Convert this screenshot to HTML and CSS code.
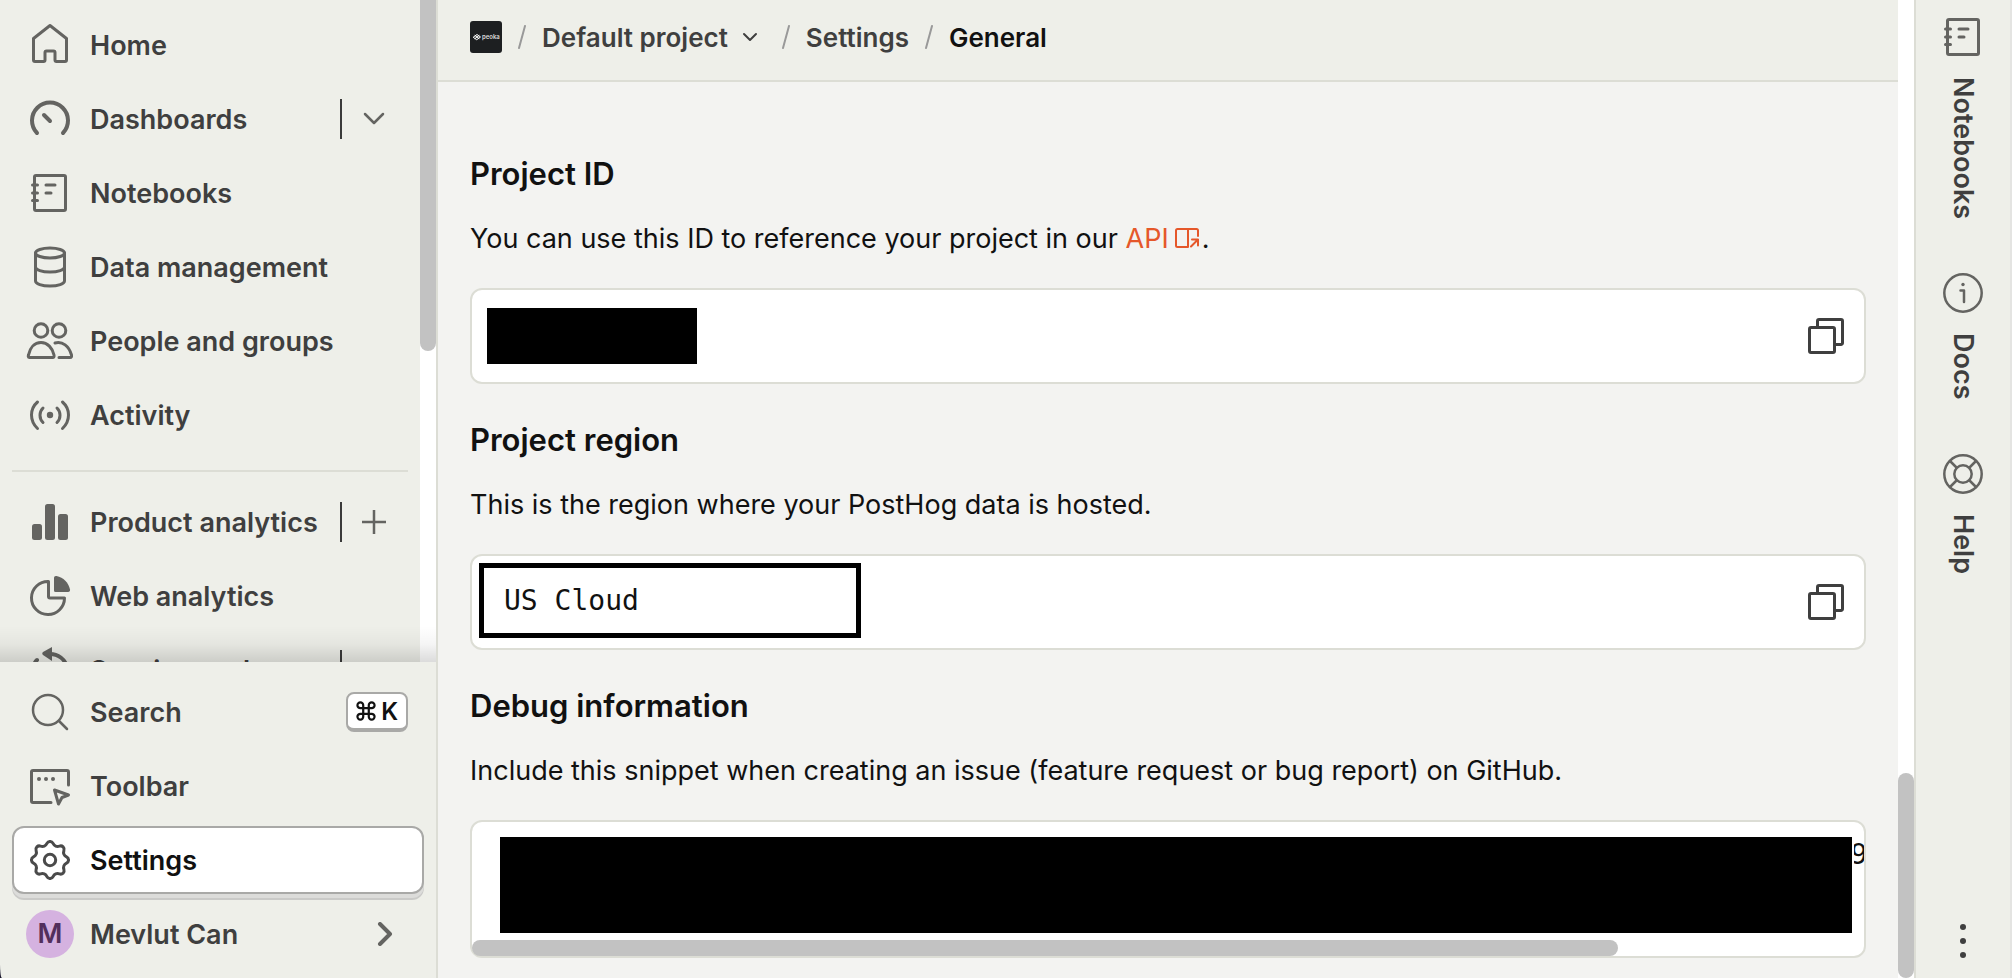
FILE: index.html
```html
<!DOCTYPE html>
<html lang="en">

<head>
  <meta charset="UTF-8">
  <meta name="viewport" content="width=device-width, initial-scale=1.0">
  <title>Settings - General</title>
  <link rel="stylesheet" href="styles.css">
</head>

<body>
  <!-- shared icons -->
  <svg class="sprite" aria-hidden="true">
    <symbol id="notebook" viewBox="0 0 48 48">
      <rect x="8.5" y="6.5" width="31" height="35" rx="1.5" />
      <path d="M6.5 16h5M6.5 24h5M6.5 31.5h5M20 16h9M20 24h5" />
    </symbol>
    <symbol id="copy" viewBox="0 0 36 36">
      <rect x="1.5" y="9.5" width="25" height="25" rx="1.5" />
      <path d="M9.5 9.5V3A1.5 1.5 0 0 1 11 1.5h22A1.5 1.5 0 0 1 34.5 3v22a1.5 1.5 0 0 1-1.5 1.5h-6.5" />
    </symbol>
  </svg>

  <div class="app">
    <div class="sidebar">
      <div class="nav-area">
        <nav class="nav">
          <ul>
            <li>
              <a href="#" class="item">
                <svg class="icon" viewBox="0 0 48 48"><path d="M24 4.5 40.500 17.500V39a1.500 1.500 0 0 1-1.500 1.500h-8.500a1.500 1.500 0 0 1-1.500-1.500v-7.500a1.500 1.500 0 0 0-1.500-1.500h-7a1.500 1.500 0 0 0-1.500 1.500V39a1.500 1.500 0 0 1-1.500 1.500H9A1.500 1.500 0 0 1 7.500 39V17.500Z" /></svg>
                Home
              </a>
            </li>
            <li>
              <a href="#" class="item">
                <svg class="icon thick" viewBox="0 0 48 48"><path d="M11 38a18 18 0 1 1 26 0M18 20l6 6" /></svg>
                Dashboards
              </a>
              <button class="side" aria-label="Open dashboards">
                <svg viewBox="0 0 24 24"><path d="m3 7 9 9 9-9" /></svg>
              </button>
            </li>
            <li>
              <a href="#" class="item">
                <svg class="icon"><use href="#notebook" /></svg>
                Notebooks
              </a>
            </li>
            <li>
              <a href="#" class="item">
                <svg class="icon" viewBox="0 0 48 48"><ellipse cx="24" cy="10" rx="14.500" ry="5" /><path d="M9.500 10v28c0 2.800 6.500 5 14.500 5s14.500-2.200 14.500-5V10M9.500 24c0 2.800 6.500 5 14.500 5s14.500-2.200 14.500-5" /></svg>
                Data management
              </a>
            </li>
            <li>
              <a href="#" class="item">
                <svg class="icon" viewBox="0 0 48 48"><circle cx="15" cy="13.500" r="6.800" /><circle cx="33" cy="13.500" r="6.800" /><path d="M3.500 40.500C2 40.500 2.200 39 2.500 38 4 30.500 8.500 25.500 15 25.500S26.500 31 28 38c.3 1.500 0 2.500-1.500 2.500ZM29 26c7.500-2 14 3 16.500 12 .3 1.500 0 2.500-1.500 2.500H33" /></svg>
                People and groups
              </a>
            </li>
            <li>
              <a href="#" class="item">
                <svg class="icon" viewBox="0 0 48 48"><circle class="fill" cx="24" cy="24" r="3.200" /><path d="M11.500 11C3.500 18 3.500 30 11.500 37.500M36.500 11c8 7 8 19 0 26.500M17 17c-4 4-4 10.500 0 14.500M31 17c4 4 4 10.500 0 14.500" /></svg>
                Activity
              </a>
            </li>
          </ul>
          <hr>
          <ul>
            <li>
              <a href="#" class="item">
                <svg class="icon" viewBox="0 0 48 48"><g class="fill"><rect x="6" y="26" width="10" height="16" rx="2.500" /><rect x="19" y="6" width="10" height="36" rx="2.500" /><rect x="32" y="16" width="10" height="26" rx="2.500" /></g></svg>
                Product analytics
              </a>
              <button class="side" aria-label="New insight">
                <svg viewBox="0 0 24 24"><path d="M12 0v24M0 12h24" /></svg>
              </button>
            </li>
            <li>
              <a href="#" class="item">
                <svg class="icon" viewBox="0 0 48 48"><path d="M22.500 9.500A16.500 16.500 0 1 0 38.500 26H24a1.500 1.500 0 0 1-1.500-1.500Z" /><path class="fill" d="M28 6c0-1.500 1-2.300 2.500-2C37.500 5.500 42.500 10.500 44 17.500c.3 1.500-.5 2.500-2 2.500H29.500A1.500 1.500 0 0 1 28 18.500Z" /></svg>
                Web analytics
              </a>
            </li>
            <li>
              <a href="#" class="item">
                <svg class="icon thick" viewBox="0 0 48 48"><path d="M24 8c8 0 15 5 17 13M11 14c-3 3-4 6-5 10" /><path class="fill" d="M26 1v14l-9-6c-1-1-1-2 0-3Z" /></svg>
                Session replay
              </a>
              <button class="side" aria-label="Open session replay"></button>
            </li>
          </ul>
        </nav>
        <div class="scrollbar">
          <div class="thumb nav-thumb"></div>
        </div>
      </div>
      <div class="nav-bottom">
        <ul>
          <li>
            <button class="item">
              <svg class="icon thin" viewBox="0 0 48 48"><circle cx="22" cy="22" r="15" /><path d="m33 33 8 8" /></svg>
              Search
              <kbd>
                <svg viewBox="0 0 18 18"><path d="M6.500 6.500h5v5h-5zM6.500 6.500V4A2.600 2.600 0 1 0 4 6.500ZM11.500 6.500V4A2.600 2.600 0 1 1 14 6.500ZM6.500 11.500V14A2.600 2.600 0 1 1 4 11.500ZM11.500 11.500V14A2.600 2.600 0 1 0 14 11.500Z" /></svg>
                K
              </kbd>
            </button>
          </li>
          <li>
            <button class="item">
              <svg class="icon" viewBox="0 0 48 48"><path d="M42.500 23V10A1.500 1.500 0 0 0 41 8.500H7A1.500 1.500 0 0 0 5.500 10v29A1.500 1.500 0 0 0 7 40.500h18M28.500 28l14 5-6.500 2.500-3.500 6.500Z" /><g class="fill"><circle cx="13" cy="17" r="2" /><circle cx="20" cy="17" r="2" /><circle cx="27" cy="17" r="2" /></g></svg>
              Toolbar
            </button>
          </li>
          <li>
            <a href="#" class="item active">
              <svg class="icon" viewBox="0 0 48 48">
                <path id="tooth" d="M24 5.500C28 5.500 26 8.600 29.700 10.100 33.400 11.600 34.300 8.100 37.100 10.900 39.900 13.700 36.400 14.600 37.900 18.300 39.400 22 42.500 20 42.500 24" />
                <use href="#tooth" transform="rotate(90 24 24)" />
                <use href="#tooth" transform="rotate(180 24 24)" />
                <use href="#tooth" transform="rotate(270 24 24)" />
                <circle cx="24" cy="24" r="5.700" />
              </svg>
              Settings
            </a>
          </li>
          <li>
            <button class="item">
              <span class="avatar">M</span>
              Mevlut Can
              <svg class="arrow" viewBox="0 0 24 24"><path d="m6 2 10 10L6 22" /></svg>
            </button>
          </li>
        </ul>
      </div>
    </div>

    <div class="main">
      <div class="page">
        <header class="breadcrumbs">
          <svg class="logo" viewBox="0 0 32 32"><rect width="32" height="32" rx="3" /><path d="m3.500 16 3.500-2.500 3.500 2.500L7 18.500ZM5 14.500l4 3M9 14.500l-4 3" /><text x="12" y="18">peoka</text></svg>
          <svg class="slash" viewBox="0 0 8 24"><path d="M7 1 1 23" /></svg>
          <button class="crumb">
            Default project
            <svg viewBox="0 0 16 16"><path d="m2 5 6 6 6-6" /></svg>
          </button>
          <svg class="slash" viewBox="0 0 8 24"><path d="M7 1 1 23" /></svg>
          <a href="#" class="crumb">Settings</a>
          <svg class="slash" viewBox="0 0 8 24"><path d="M7 1 1 23" /></svg>
          <span class="crumb here">General</span>
        </header>
        <main class="content">
          <section>
            <h2>Project ID</h2>
            <p>You can use this ID to reference your project in our <a href="#">API<svg viewBox="0 0 24 20"><path d="M23 8V2.500A1.500 1.500 0 0 0 21.500 1h-19A1.500 1.500 0 0 0 1 2.500v15A1.500 1.500 0 0 0 2.500 19H13M13 1v18M16 18.500l7-7M17 11.500h6v6" /></svg></a>.</p>
            <div class="snippet">
              <div class="mask"></div>
              <button aria-label="Copy project ID"><svg><use href="#copy" /></svg></button>
            </div>
          </section>
          <section>
            <h2>Project region</h2>
            <p>This is the region where your PostHog data is hosted.</p>
            <div class="snippet region">
              <code>US Cloud</code>
              <button aria-label="Copy project region"><svg><use href="#copy" /></svg></button>
            </div>
          </section>
          <section>
            <h2>Debug information</h2>
            <p>Include this snippet when creating an issue (feature request or bug report) on GitHub.</p>
            <div class="snippet debug">
              <div class="line">
                <div class="mask"></div>
                <code><span>9</span></code>
              </div>
              <div class="thumb debug-thumb"></div>
            </div>
          </section>
        </main>
      </div>
      <div class="scrollbar">
        <div class="thumb page-thumb"></div>
      </div>
    </div>

    <aside class="panel">
      <button>
        <svg class="icon"><use href="#notebook" /></svg>
        <span>Notebooks</span>
      </button>
      <button>
        <svg class="icon thin" viewBox="0 0 48 48"><circle cx="24" cy="24" r="18.700" /><circle class="fill" cx="24" cy="15.500" r="1.700" /><path d="M21.500 21.500H25V33" /></svg>
        <span>Docs</span>
      </button>
      <button>
        <svg class="icon thin" viewBox="0 0 48 48"><circle cx="24" cy="24" r="18.700" /><circle cx="24" cy="24" r="8.700" /><path d="m11 11 6.500 6.500M37 11l-6.500 6.500M11 37l6.500-6.500M37 37l-6.500-6.500" /></svg>
        <span>Help</span>
      </button>
      <button class="more" aria-label="More options">
        <svg viewBox="0 0 6 34"><circle cx="3" cy="3" r="3" /><circle cx="3" cy="17" r="3" /><circle cx="3" cy="31" r="3" /></svg>
      </button>
    </aside>
  </div>
</body>

</html>
```
FILE: styles.css
```css
* {
  margin: 0;
  padding: 0;
  box-sizing: border-box;
}

body {
  background-color: #1d1b2f;
  color: #111;
  font-family: Inter, "Liberation Sans", sans-serif;
  font-size: 27px;
}

ul {
  list-style: none;
}

a {
  color: inherit;
  text-decoration: none;
}

button {
  border: 0;
  background: none;
  color: inherit;
  font: inherit;
  cursor: pointer;
}

svg {
  fill: none;
  stroke: currentColor;
  stroke-width: 3;
  stroke-linecap: round;
  stroke-linejoin: round;
  flex-shrink: 0;
}

.sprite {
  display: none;
}

.app {
  display: flex;
  height: 100vh;
  overflow: hidden;
}

.icon {
  width: 48px;
  height: 48px;
  color: #646461;

  &.thick {
    stroke-width: 4;
  }

  &.thin {
    stroke-width: 2.5;
  }
}

.fill {
  fill: currentColor;
  stroke: none;
}

.scrollbar {
  width: 16px;
  flex-shrink: 0;
  background-color: #fff;
}

.thumb {
  background-color: #c2c2c2;
  border-radius: 8px;
}

/* sidebar */
.sidebar {
  width: 438px;
  flex-shrink: 0;
  display: flex;
  flex-direction: column;
  background-color: #eeefe9;
  border-right: 2px solid #dcddd5;
  border-bottom-left-radius: 2px 14px;
  color: #3f3f3f;
  font-weight: 600;

  & li {
    height: 74px;
    display: flex;
    align-items: center;
  }
}

.nav-area {
  flex: 1;
  min-height: 0;
  display: flex;
  overflow: hidden;
  position: relative;

  /* shade above the bottom block */
  &::after {
    content: "";
    position: absolute;
    left: 0;
    right: 0;
    bottom: 0;
    height: 36px;
    background: linear-gradient(to top, rgba(0, 0, 0, .14), rgba(0, 0, 0, .04) 50%, transparent);
  }
}

.nav {
  flex: 1;
  padding: 8px 12px;

  & hr {
    border: 0;
    height: 2px;
    margin: 18px 0 13px;
    background-color: #dcddd5;
  }
}

.nav-thumb {
  height: 53%;
  border-radius: 0 0 8px 8px;
}

.item {
  flex: 1;
  height: 68px;
  display: flex;
  align-items: center;
  gap: 16px;
  padding: 0 14px 0 12px;
  border: 2px solid transparent;
  border-radius: 12px;
  white-space: nowrap;

  &.active {
    background-color: #fff;
    border-color: #a9a9a7;
    box-shadow: 0 4px 0 #dcdcda, 0 6px 0 #cacac8;
    color: #111;

    & .icon {
      color: #4a4a4a;
    }
  }
}

.side {
  width: 68px;
  height: 40px;
  display: flex;
  align-items: center;
  padding-left: 20px;
  border-left: 2px solid #3a3a3a;
  color: #646461;

  & svg {
    width: 24px;
    height: 24px;
    stroke-width: 2.5;
  }
}

.nav-bottom {
  padding: 13px 12px 7px;

  & .item {
    padding-right: 14px;
  }
}

kbd {
  height: 40px;
  display: flex;
  align-items: center;
  gap: 5px;
  margin-left: auto;
  padding: 0 8px;
  background-color: #fff;
  border: 2px solid #a9a9a7;
  border-bottom-width: 4px;
  border-radius: 8px;
  color: #111;
  font: 600 24px Inter, "Liberation Sans", sans-serif;

  & svg {
    width: 20px;
    height: 20px;
    stroke-width: 2;
  }
}

.avatar {
  width: 48px;
  height: 48px;
  border-radius: 50%;
  background-color: #d5b2e0;
  color: #522f5c;
  line-height: 48px;
  text-align: center;
}

.arrow {
  width: 24px;
  height: 24px;
  margin: 0 10px 0 auto;
  color: #646461;
  stroke-width: 4;
}

/* page */
.main {
  flex: 1;
  min-width: 0;
  display: flex;
  background-color: #f3f3f1;

  & .scrollbar {
    display: flex;
    flex-direction: column;
    justify-content: flex-end;
  }
}

.page {
  flex: 1;
  min-width: 0;
}

.page-thumb {
  height: 21%;
}

.breadcrumbs {
  height: 82px;
  display: flex;
  align-items: center;
  gap: 16px;
  padding: 0 32px 6px;
  background-color: #eeefe9;
  border-bottom: 2px solid #dcddd5;
  color: #3f3f3f;
  font-size: 26px;
  font-weight: 600;
}

.logo {
  width: 32px;
  height: 32px;
  stroke: #fff;
  stroke-width: 1;

  & rect {
    fill: #1d1f21;
    stroke: none;
  }

  & text {
    fill: #ddd;
    stroke: none;
    font-size: 6px;
  }
}

.slash {
  width: 8px;
  height: 24px;
  color: #999;
  stroke-width: 2;
}

.crumb {
  display: flex;
  align-items: center;
  gap: 14px;

  & svg {
    width: 16px;
    height: 16px;
    margin-right: 8px;
    stroke-width: 2;
  }

  &.here {
    color: #111;
  }
}

.content {
  padding: 72px 32px 20px;

  & section {
    margin-bottom: 36px;
  }

  & h2 {
    font-size: 31px;
    font-weight: 600;
    line-height: 40px;
  }

  & p {
    margin: 25px 0 29px;
    line-height: 40px;
  }

  & p a {
    color: #e5572a;
  }

  & p svg {
    width: 24px;
    height: 20px;
    margin: 0 3px 0 6px;
    stroke-width: 2;
  }
}

.snippet {
  height: 96px;
  display: flex;
  align-items: center;
  justify-content: space-between;
  padding: 0 20px 0 15px;
  background-color: #fff;
  border: 2px solid #dcddd5;
  border-radius: 12px;

  & .mask {
    width: 210px;
    height: 56px;
    background-color: #000;
  }

  & button,
  & button svg {
    display: block;
    width: 36px;
    height: 36px;
    color: #3f3f3f;
  }

  & code {
    font-family: "DejaVu Sans Mono", monospace;
    font-size: 28px;
  }
}

.region {
  padding-left: 7px;

  & code {
    width: 382px;
    height: 75px;
    margin-bottom: 3px;
    padding-left: 20px;
    border: 5px solid #000;
    line-height: 65px;
  }
}

.debug {
  height: 138px;
  display: block;
  padding: 15px 0 0;

  & .line {
    display: flex;
    gap: 2px;
    margin-bottom: 7px;
    padding-left: 28px;
  }

  & .mask {
    flex: 1;
    width: auto;
    height: 96px;
  }

  & code {
    width: 10px;
    height: 36px;
    display: flex;
    justify-content: center;
    overflow: hidden;
    line-height: 36px;
  }
}

.debug-thumb {
  width: 82.3%;
  height: 16px;
}

/* right panel */
.panel {
  width: 98px;
  flex-shrink: 0;
  display: flex;
  flex-direction: column;
  align-items: center;
  gap: 50px;
  padding: 13px 0 20px;
  background-color: #eeefe9;
  border-left: 2px solid #dcddd5;
  border-right: 2px solid #e4e4e2;
  color: #3f3f3f;
  font-weight: 600;

  & button {
    display: flex;
    flex-direction: column;
    align-items: center;
    gap: 16px;
  }

  & span {
    writing-mode: vertical-rl;
  }

  & .more {
    margin-top: auto;
  }

  & .more svg {
    width: 6px;
    height: 34px;
    fill: currentColor;
    stroke: none;
  }
}
```
